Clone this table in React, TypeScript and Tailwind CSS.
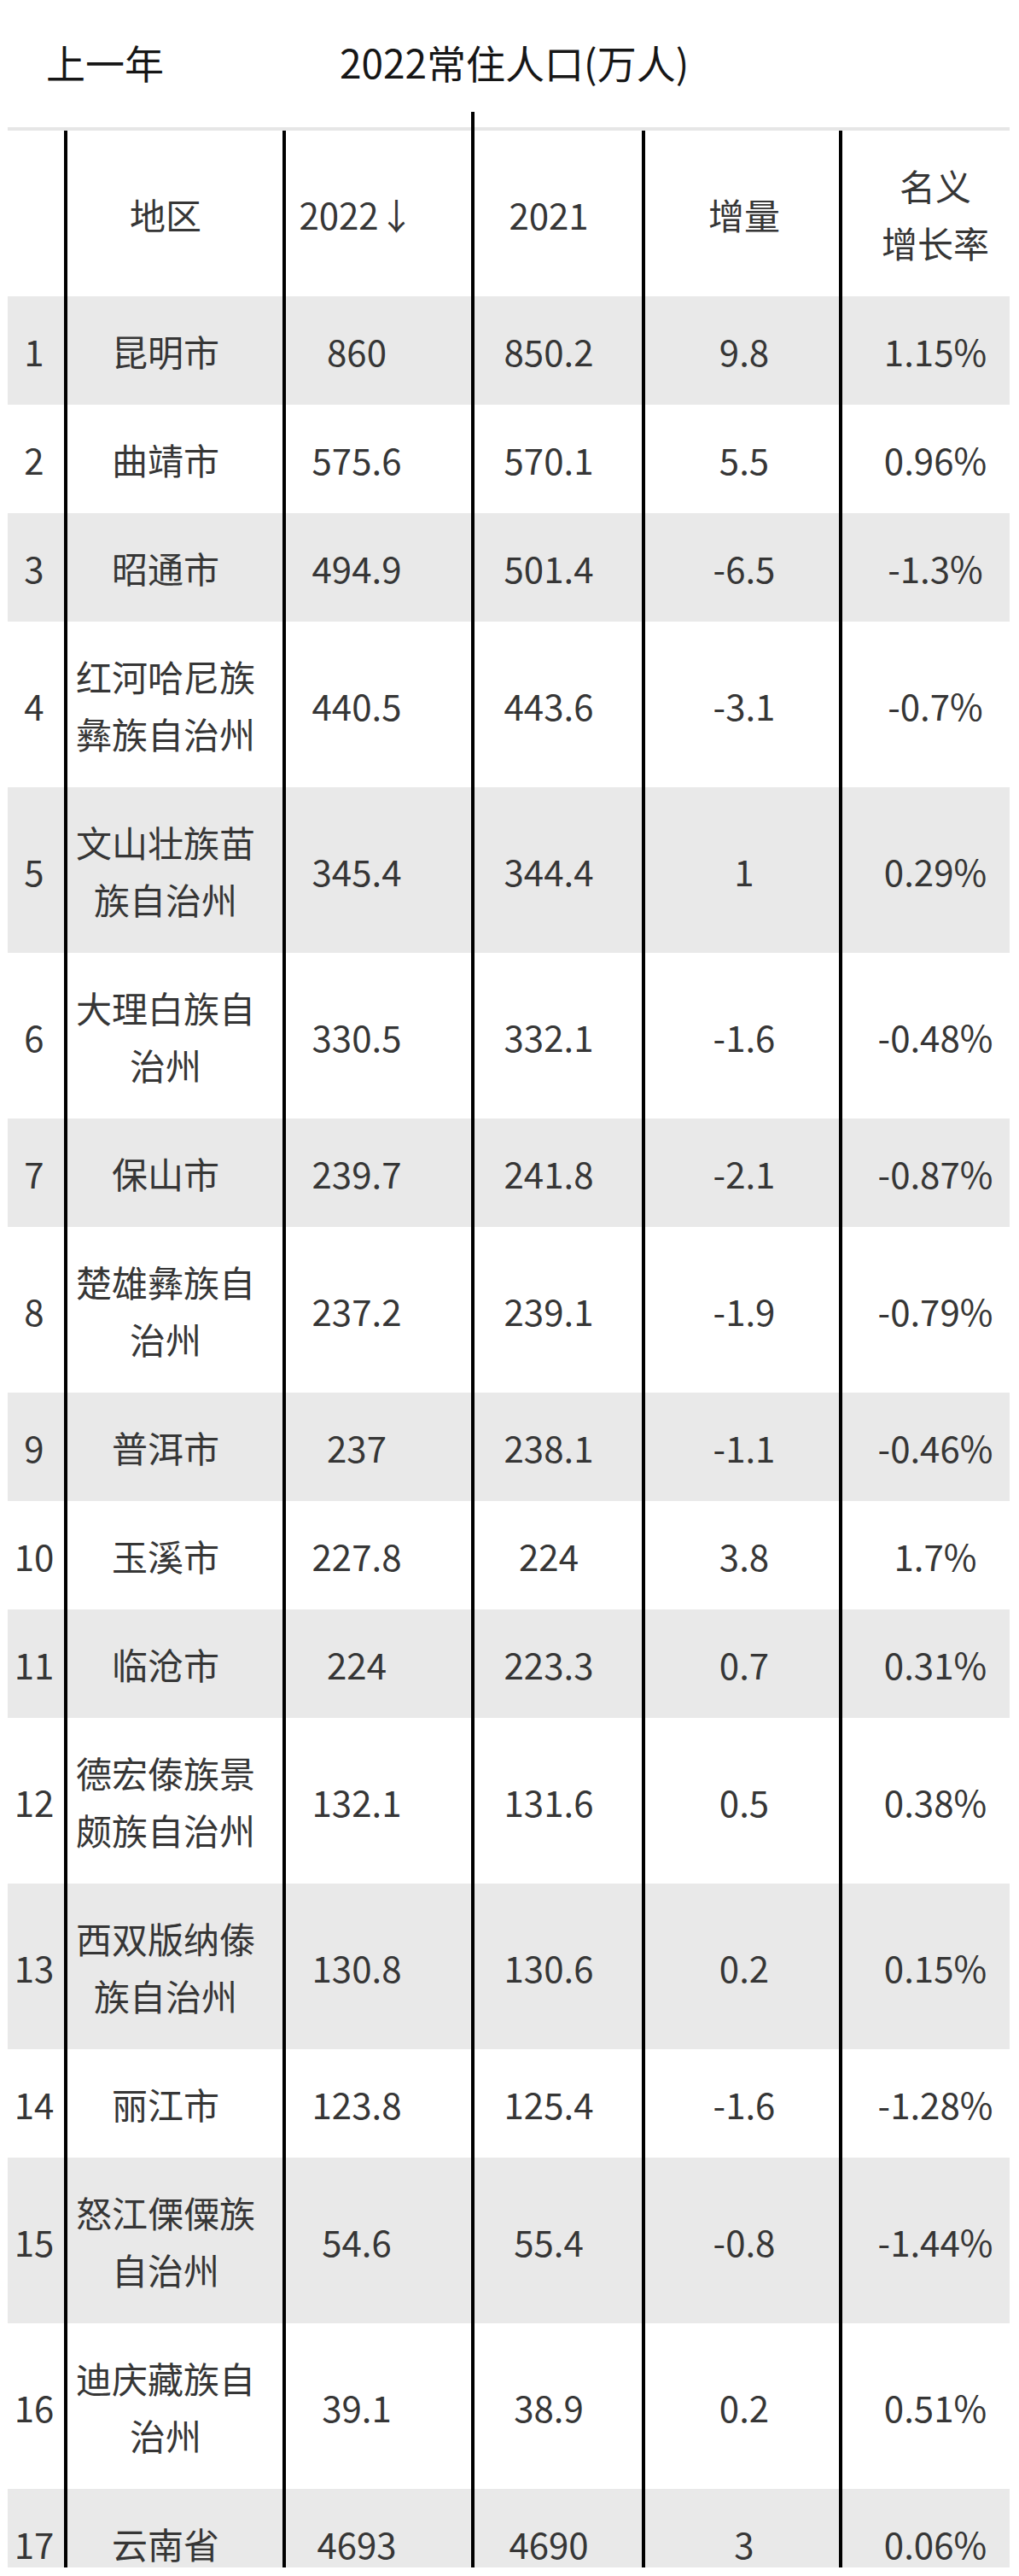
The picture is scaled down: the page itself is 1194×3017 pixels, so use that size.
const rows = [
  ["1", "昆明市", "860", "850.2", "9.8", "1.15%"],
  ["2", "曲靖市", "575.6", "570.1", "5.5", "0.96%"],
  ["3", "昭通市", "494.9", "501.4", "-6.5", "-1.3%"],
  ["4", "红河哈尼族彝族自治州", "440.5", "443.6", "-3.1", "-0.7%"],
  ["5", "文山壮族苗族自治州", "345.4", "344.4", "1", "0.29%"],
  ["6", "大理白族自治州", "330.5", "332.1", "-1.6", "-0.48%"],
  ["7", "保山市", "239.7", "241.8", "-2.1", "-0.87%"],
  ["8", "楚雄彝族自治州", "237.2", "239.1", "-1.9", "-0.79%"],
  ["9", "普洱市", "237", "238.1", "-1.1", "-0.46%"],
  ["10", "玉溪市", "227.8", "224", "3.8", "1.7%"],
  ["11", "临沧市", "224", "223.3", "0.7", "0.31%"],
  ["12", "德宏傣族景颇族自治州", "132.1", "131.6", "0.5", "0.38%"],
  ["13", "西双版纳傣族自治州", "130.8", "130.6", "0.2", "0.15%"],
  ["14", "丽江市", "123.8", "125.4", "-1.6", "-1.28%"],
  ["15", "怒江傈僳族自治州", "54.6", "55.4", "-0.8", "-1.44%"],
  ["16", "迪庆藏族自治州", "39.1", "38.9", "0.2", "0.51%"],
  ["17", "云南省", "4693", "4690", "3", "0.06%"],
];

// column widths include the 4px black rule on the left of cols 1..5
const grid = "grid grid-cols-[66px_256px_221px_200px_231px_200px]";
const cell = "flex items-center justify-center text-center py-[30px] leading-[67px]";
const cols = [
  `${cell} pr-[4px]`,
  `${cell} border-l-4 border-black pr-[22px]`,
  `${cell} border-l-4 border-black pr-[51px]`,
  `${cell} border-l-4 border-black pr-[22px]`,
  `${cell} border-l-4 border-black pl-[5px]`,
  `${cell} border-l-4 border-black pl-[22px]`,
];

export default function App() {
  return (
    <div
      className="w-[1194px] h-[3017px] bg-white text-[#363636]"
      style={{ fontFamily: '"Noto Sans CJK SC", "Noto Sans", sans-serif' }}
    >
      <div className="h-[3007px] overflow-hidden">
        <div className="flex items-center h-[149px] pb-[4px] text-[46px] text-[#161616]">
          <span className="ml-[54px]">上一年</span>
          <span className="ml-[206px]">2022常住人口(万人)</span>
        </div>

        <div className="ml-[9px] w-[1174px] text-[42px]">
          <div className="h-[4px] bg-[#e6e6e6]" />
          <div className={`${grid} relative`}>
            <div className="absolute left-[543px] -top-[22px] h-[22px] w-[4px] bg-black" />
            <div className={cols[0]} />
            <div className={cols[1]}>地区</div>
            <div className={cols[2]}>2022↓</div>
            <div className={cols[3]}>2021</div>
            <div className={cols[4]}>增量</div>
            <div className={cols[5]}>
              名义
              <br />
              增长率
            </div>
          </div>

          {rows.map((r, i) => (
            <div key={r[0]} className={`${grid} ${i % 2 === 0 ? "bg-[#e9e9e9]" : "bg-white"}`}>
              {r.map((v, j) => (
                <div key={j} className={cols[j]}>
                  {v}
                </div>
              ))}
            </div>
          ))}
        </div>
      </div>
    </div>
  );
}
